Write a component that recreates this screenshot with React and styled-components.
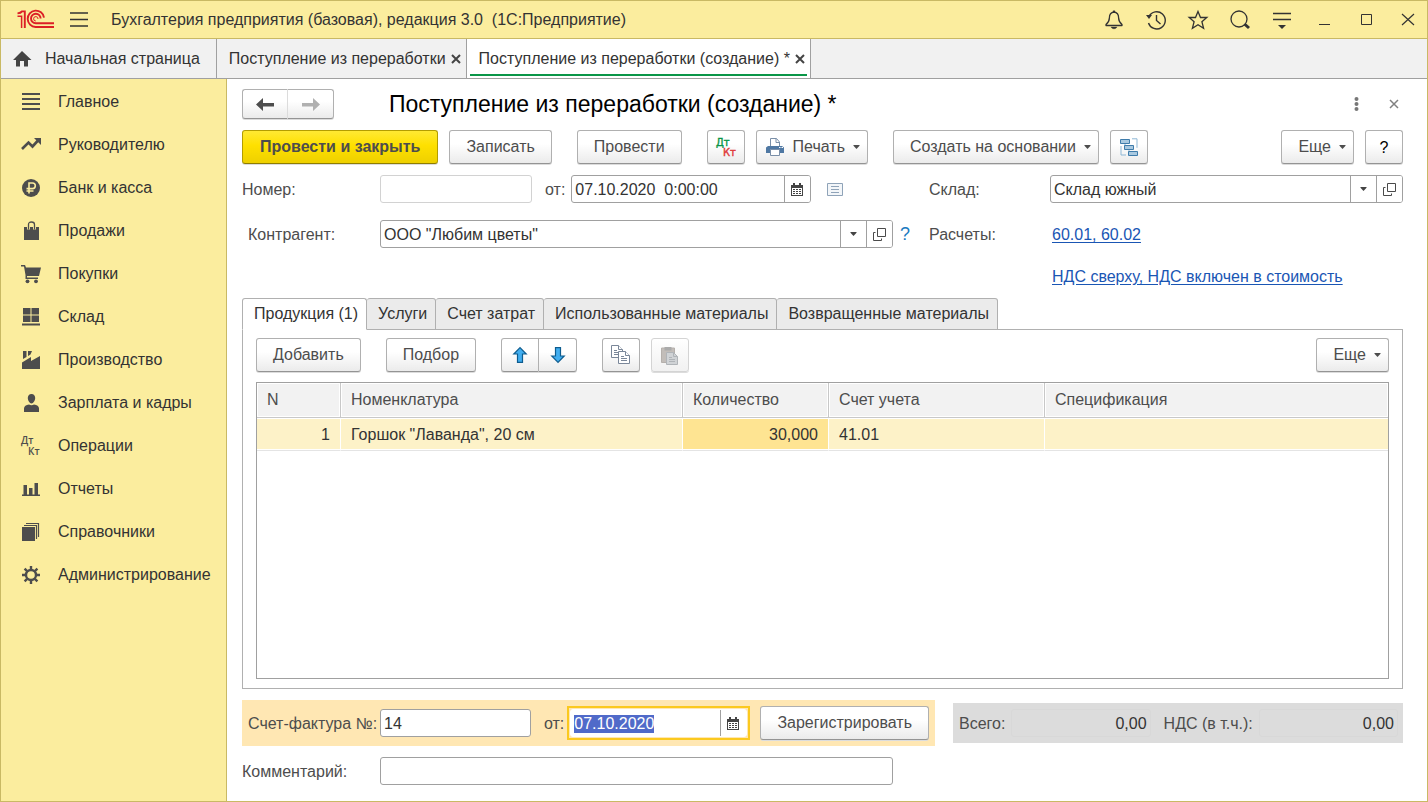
import React, { useEffect, useRef } from "react";
import styled, { createGlobalStyle, css } from "styled-components";

const color = {
  yellow: "#fbed9e",
  frame: "#c9b964",
  text: "#333333",
  label: "#4d4d4d",
  icon: "#4d4d4d",
  line: "#a0a0a0",
  tabLine: "#b0b0b0",
  link: "#1a56b4",
};

const GlobalStyle = createGlobalStyle`
  *, *::before, *::after { box-sizing: border-box; }
  body { margin: 0; background: #fff; }
  body, button, input { font-family: "Liberation Sans", Arial, sans-serif; font-size: 16px; }
  svg { display: block; flex: none; overflow: visible; }
  ::selection { background: rgba(78, 104, 200, 0.99); color: #fff; }
`;

/* ---------- window frame ---------- */

const Window = styled.div`
  min-height: 100vh;
  display: flex;
  flex-direction: column;
  border: 1px solid ${color.frame};
  color: ${color.text};
  line-height: 20px;
`;

const TitleBar = styled.header`
  height: 38px;
  display: flex;
  align-items: center;
  padding: 0 9px 0 16px;
  background: ${color.yellow};
  border-bottom: 1px solid ${color.frame};
`;

const BarButton = styled.button`
  width: 20px;
  height: 20px;
  padding: 0;
  border: 0;
  background: none;
  color: ${color.text};
  display: flex;
  align-items: center;
  justify-content: center;
`;

const MenuButton = styled(BarButton)`
  margin: 0 22px 0 15px;
`;

const AppTitle = styled.span`
  flex: 1;
  white-space: pre;
`;

const BarActions = styled.div`
  display: flex;
  gap: 22px;
`;

const WindowTabs = styled.nav`
  height: 40px;
  display: flex;
  background: #f1f1f1;
  border-bottom: 1px solid ${color.line};
`;

const WindowTab = styled.div`
  position: relative;
  display: flex;
  align-items: center;
  gap: 5px;
  padding: 0 5px 0 12px;
  border-right: 1px solid ${color.line};
  white-space: nowrap;
  background: ${(p) => (p.$active ? "#fff" : "transparent")};
  ${(p) =>
    p.$active &&
    css`
      &::after {
        content: "";
        position: absolute;
        left: 3px;
        right: 3px;
        bottom: 2px;
        height: 2px;
        background: #0a9648;
      }
    `}
`;

const TabLink = styled.a`
  display: flex;
  align-items: center;
  gap: 12px;
  color: ${color.text};
  text-decoration: none;
  padding-right: ${(p) => (p.$home ? "11px" : "0")};
`;

const CloseButton = styled.button`
  width: ${(p) => (p.$muted ? "12px" : "10px")};
  height: 12px;
  padding: 0;
  border: 0;
  background: none;
  color: ${(p) => (p.$muted ? "#808080" : "#444")};
  display: flex;
  align-items: center;
  justify-content: center;
`;

const Body = styled.div`
  flex: 1;
  display: flex;
`;

const Sidebar = styled.nav`
  flex: none;
  width: 226px;
  background: ${color.yellow};
  border-right: 1px solid ${color.frame};
`;

const SidebarLink = styled.a`
  height: 43px;
  display: flex;
  align-items: center;
  gap: 17px;
  padding: 2px 0 0 20px;
  color: ${color.text};
  text-decoration: none;
  svg { color: ${color.icon}; }
`;

/* ---------- document form ---------- */

const Form = styled.main`
  flex: 1;
  min-width: 0;
  display: flex;
  flex-direction: column;
  padding: 10px 24px 16px 15px;
`;

const FormHeader = styled.div`
  display: flex;
  align-items: center;
  margin-bottom: 11px;
`;

const Heading = styled.h1`
  flex: 1;
  margin: 0 0 0 55px;
  font-size: 23px;
  line-height: 30px;
  font-weight: 400;
  color: #000;
`;

const HeaderActions = styled.div`
  display: flex;
  align-items: center;
  gap: 26px;
  padding-right: 3px;
`;

const Button = styled.button`
  flex: none;
  height: 34px;
  min-width: ${(p) => (p.$square ? "38px" : "0")};
  padding: ${(p) => (p.$square ? "0" : p.$menu ? "0 7px 0 16px" : "0 16px")};
  display: flex;
  align-items: center;
  justify-content: center;
  gap: 8px;
  border: 1px solid #b0b0b0;
  border-bottom-color: #949494;
  border-radius: 3px;
  background: linear-gradient(#fff 0%, #fff 40%, #ebebeb 100%);
  box-shadow: 0 1px 0 #dcdcdc;
  color: ${color.label};
  white-space: nowrap;
  ${(p) =>
    p.$primary &&
    css`
      padding: 0 17px;
      border-color: #b39d00;
      border-bottom-color: #8f7d00;
      background: linear-gradient(#ffe933 0%, #fee000 45%, #eed000 100%);
      font-weight: 700;
    `}
  ${(p) =>
    p.$print &&
    css`
      padding-left: 9px;
    `}
  ${(p) =>
    p.$help &&
    css`
      padding-top: 2px;
      color: #000;
    `}
  &:disabled {
    border-color: #d4d4d4;
    background: linear-gradient(#fff, #f1f1f1);
  }
`;

const ButtonPair = styled.div`
  display: flex;
  ${Button} {
    min-width: ${(p) => (p.$nav ? "46px" : "38px")};
    height: ${(p) => (p.$nav ? "30px" : "34px")};
  }
  ${Button}:first-child { border-radius: 3px 0 0 3px; }
  ${Button}:last-child { border-radius: 0 3px 3px 0; border-left: 0; }
  ${Button}:first-child { border-right-color: ${(p) => (p.$nav ? "#dcdcdc" : "#b0b0b0")}; }
`;

const Toolbar = styled.div`
  display: flex;
  gap: 25px;
`;

const ToolGroup = styled.div`
  display: flex;
  gap: 11px;
  ${(p) =>
    p.$end &&
    css`
      margin-left: auto;
    `}
`;

const Fields = styled.div`
  display: grid;
  grid-template-columns: 138px minmax(0, 549fr) 121px minmax(0, 353fr);
  align-items: center;
  row-gap: 17px;
  margin: 11px 0 7px;
`;

const Label = styled.label`
  color: ${color.label};
  white-space: nowrap;
  padding-top: 2px;
  padding-left: ${(p) => (p.$indent ? "6px" : "0")};
`;

const FieldLine = styled.div`
  display: flex;
  align-items: center;
  min-width: 0;
`;

const FieldBox = styled.div`
  display: flex;
  flex: 1;
  min-width: 0;
  height: 28px;
  overflow: hidden;
  border: 1px solid ${(p) => (p.$pale ? "#d2d2d2" : color.line)};
  border-radius: 3px;
  background: #fff;
`;

const TextInput = styled.input`
  flex: 1;
  width: 0;
  min-width: 0;
  padding: 2px 3px 0;
  border: 0;
  outline: 0;
  background: transparent;
  color: ${color.text};
  text-align: ${(p) => (p.$right ? "right" : "left")};
`;

const FieldButton = styled.button`
  flex: none;
  width: 26px;
  padding: 0;
  border: 0;
  border-left: 1px solid ${color.line};
  background: #fff;
  color: #444;
  display: flex;
  align-items: center;
  justify-content: center;
`;

const FixedField = styled.div`
  flex: none;
  display: flex;
  width: ${(p) => p.$width}px;
`;

const Between = styled(Label)`
  padding-left: 13px;
  padding-right: 6px;
`;

const IconButton = styled.button`
  padding: 0;
  border: 0;
  background: none;
  margin-left: 16px;
`;

const Hint = styled.button`
  width: 36px;
  padding: 0 0 0 7px;
  border: 0;
  background: none;
  color: #1a7abf;
  font-size: 18px;
  text-align: left;
`;

const Link = styled.a`
  color: ${color.link};
  padding-top: 2px;
  padding-left: 2px;
  white-space: nowrap;
  text-underline-offset: 2px;
`;

const VatLine = styled.div`
  grid-column: 4;
  line-height: 28px;
  margin-top: -2px;
`;

/* ---------- tabbed table ---------- */

const TabStrip = styled.div`
  display: flex;
  margin-bottom: -1px;
`;

const Tab = styled.button`
  height: 32px;
  padding: 0 8px 0 11px;
  border: 1px solid ${color.tabLine};
  border-left-width: ${(p) => (p.$active ? "1px" : "0")};
  border-radius: 3px 3px 0 0;
  border-bottom-color: ${(p) => (p.$active ? "#fff" : color.tabLine)};
  background: ${(p) => (p.$active ? "#fff" : "#ebebeb")};
  color: ${color.text};
  white-space: nowrap;
  position: relative;
`;

const Panel = styled.section`
  flex: 1;
  display: flex;
  flex-direction: column;
  gap: 10px;
  padding: 8px 13px 9px;
  border: 1px solid ${color.tabLine};
`;

const TableFrame = styled.div`
  flex: 1;
  border: 1px solid ${color.line};
`;

const Table = styled.table`
  width: 100%;
  table-layout: fixed;
  border-spacing: 0;
`;

const Col = styled.col`
  width: ${(p) => (p.$width ? `${p.$width}px` : "auto")};
`;

const HeadCell = styled.th`
  height: 35px;
  padding: 0 10px;
  text-align: left;
  font-weight: 400;
  color: ${color.label};
  background: #f2f2f2;
  border-bottom: 1px solid #c8c8c8;
  border-right: 1px solid #c8c8c8;
  box-shadow: inset 0 0 0 1px #fff;
  &:last-child { border-right: 0; }
`;

const Cell = styled.td`
  height: 33px;
  padding: 2px 10px 0;
  text-align: ${(p) => (p.$right ? "right" : "left")};
  background: ${(p) => (p.$current ? "#fee492" : "#fdf2c8")};
  border-bottom: 1px solid #e4e4e4;
  border-right: 1px solid #fff;
  box-shadow: inset 0 1px 0 #fff, inset 0 -1px 0 #fff;
  &:last-child { border-right: 0; }
`;

/* ---------- footer ---------- */

const Footer = styled.div`
  display: grid;
  grid-template-columns: minmax(0, 693fr) minmax(0, 450fr);
  align-items: center;
  gap: 18px;
  margin: 11px 0;
`;

const InvoiceBox = styled.div`
  height: 46px;
  display: flex;
  align-items: center;
  padding: 0 6px;
  background: #ffe7b3;
`;

const InvoiceLabel = styled(Label)`
  flex: none;
  width: 132px;
`;

const FocusRing = styled.div`
  flex: 183 1 0;
  display: flex;
  margin-right: 10px;
  margin-left: -3px;
  border: 2px solid #fbc91f;
  padding: 1px;
  ${FieldBox} { border-color: #fff; }
`;

const InvoiceNumber = styled.div`
  flex: 156 1 0;
  display: flex;
`;

const TotalsBox = styled.div`
  height: 40px;
  display: flex;
  align-items: center;
  padding: 0 5px 0 6px;
  background: #dcdcdc;
  ${FieldBox} { background: transparent; border-color: #d8d8d8; margin-left: 6px; }
  ${Label} + ${FieldBox} + ${Label} { padding-left: 13px; }
`;

const CommentLine = styled.div`
  display: grid;
  grid-template-columns: 138px minmax(0, 513fr) minmax(0, 510fr);
  align-items: center;
`;

/* ---------- icons ---------- */

const Svg = ({ w = 20, h = w, children, ...rest }) => (
  <svg width={w} height={h} viewBox={`0 0 ${w} ${h}`} fill="none" aria-hidden="true" {...rest}>
    {children}
  </svg>
);

const Logo = () => (
  <Svg w={37} h={19} stroke="#dc1f26" strokeWidth="1.9">
    <path d="M7.800 18V1.400H5C4.200 2.600 2.600 3.200.500 3.400" />
    <path d="M4.600 18V6.200H.500" strokeWidth="1.5" />
    <path d="M27 7.600A8.200 8.200 0 1 0 18.600 17H37" />
    <path d="M23.600 8.600A4.800 4.800 0 1 0 18.800 13.300H37" />
    <path d="M21 9a2.200 2.200 0 1 0-2.200 2" strokeWidth="1" />
  </Svg>
);

const Burger = () => (
  <Svg w={18} h={15} stroke="currentColor" strokeWidth="1.4">
    <path d="M0 1h18M0 7.5h18M0 14h18" />
  </Svg>
);

const Bell = () => (
  <Svg stroke="currentColor" strokeWidth="1.3" strokeLinejoin="round">
    <path d="M10 2C6.600 2.500 5.400 5 5.400 7.800c0 3.200-1 4.800-3.400 6.800v.9h16v-.9c-2.400-2-3.400-3.600-3.400-6.800C14.600 5 13.400 2.500 10 2z" />
    <path d="M9 .8h2v1.500H9zM7 17h6c-.6 1.200-1.500 1.800-3 1.800S7.600 18.200 7 17z" fill="currentColor" strokeWidth=".3" />
  </Svg>
);

const History = () => (
  <Svg stroke="currentColor" strokeWidth="1.4">
    <path d="M3 6.500A8.600 8.600 0 1 1 2.500 13" />
    <path d="M10.500 5v5.500l4 3.500" />
    <path d="M0 5h6L3 9z" fill="currentColor" stroke="none" />
  </Svg>
);

const Star = () => (
  <Svg stroke="currentColor" strokeWidth="1.3">
    <path d="m10 1.500 2.500 6h6.300l-4.900 4.200 1.700 6.600-5.600-3.600-5.600 3.600 1.700-6.600L1.200 7.500h6.300z" />
  </Svg>
);

const Search = () => (
  <Svg stroke="currentColor" strokeWidth="1.3">
    <circle cx="9" cy="9" r="8" />
    <path d="m14.500 14 4.500 4" strokeWidth="3" />
  </Svg>
);

const Settings = () => (
  <Svg stroke="currentColor" strokeWidth="1.5">
    <path d="M1 3.500h18M1 9.500h18" />
    <path d="M6 15h8l-4 4z" fill="currentColor" stroke="none" />
  </Svg>
);

const Minimize = () => (
  <Svg stroke="currentColor"><path d="M5 14.500h11" /></Svg>
);

const Maximize = () => (
  <Svg stroke="currentColor"><path d="M5.500 4.500h10v10h-10z" /></Svg>
);

const CloseWindow = () => (
  <Svg stroke="currentColor" strokeWidth="1.2"><path d="m4 4 12 11M16 4 4 15" /></Svg>
);

const Cross = ({ thin }) => (
  <Svg w={10} stroke="currentColor" strokeWidth={thin ? 1.5 : 2}>
    <path d="m1 1 8 8M9 1 1 9" />
  </Svg>
);

const Home = () => (
  <Svg w={20} h={16} fill="#444">
    <path d="M9 0l9.500 9H15v6.500h-4V10H7v5.500H3V9H0z" />
  </Svg>
);

const Caret = () => (
  <Svg w={7} h={4} fill="currentColor"><path d="M.5 0h6v.8L3.500 4 .5.800z" /></Svg>
);

const MainIcon = () => (
  <Svg stroke="currentColor" strokeWidth="1.8"><path d="M1 2h18M1 7h18M1 12h18M1 17h18" /></Svg>
);

const ChiefIcon = () => (
  <Svg stroke="currentColor" strokeWidth="2.6">
    <path d="m1 14 6.500-6.500 4 4L17 5.500" />
    <path d="M13 3h7v7z" fill="currentColor" stroke="none" />
  </Svg>
);

const BankIcon = () => (
  <Svg>
    <circle cx="10" cy="10" r="9" fill="currentColor" />
    <path d="M8 15.500V5h3.500a2.800 2.800 0 0 1 0 5.600H5.500M5.500 13h7" stroke={color.yellow} strokeWidth="1.6" />
  </Svg>
);

const SalesIcon = () => (
  <Svg>
    <path d="M3 6h15v13H3z" fill="currentColor" />
    <path d="M7.500 8.500V3.500Q7.500 1 10.500 1t3 2.500v5" stroke={color.yellow} strokeWidth="3" />
    <path d="M7.500 8.500V3.500Q7.500 1 10.500 1t3 2.500v5" stroke="currentColor" strokeWidth="1.3" />
  </Svg>
);

const PurchaseIcon = () => (
  <Svg fill="currentColor">
    <path d="M0 1h4l1 2.500h15L18 12H6v1.500h11V15H4.500v-4L3 2.500H0z" />
    <circle cx="6.500" cy="17.300" r="1.900" />
    <circle cx="15" cy="17.300" r="1.900" />
  </Svg>
);

const StockIcon = () => (
  <Svg fill="currentColor">
    <path d="M2 1h7.500v6.500H2zM10.500 1H18v6.500h-7.500zM2 8.500h7.500V15H2zM10.500 8.500H18V15h-7.500zM1 16.500h18v2H1z" />
  </Svg>
);

const FactoryIcon = () => (
  <Svg fill="currentColor">
    <path d="M1 19v-6.500L10 7v4l9-5v13zM2 1h3.500v6L2 9zM7 1h4L9.500 4.500 7 6z" />
  </Svg>
);

const StaffIcon = () => (
  <Svg fill="currentColor">
    <path d="M10.500 1C13 1 14.200 2.800 14.200 5s-1.700 5.500-3.700 5.500S6.800 7.200 6.800 5 8 1 10.500 1zM3 19v-3.500c0-2.500 2-3.500 5-4 1.500 1 3.500 1 5 0 3 .5 5 1.500 5 4V19z" />
  </Svg>
);

const OperationsIcon = () => (
  <Svg fontFamily="Open Sans, sans-serif" fontSize="10" fontWeight="600" fill="currentColor">
    <text x="0" y="8">Дт</text>
    <text x="7" y="19">Кт</text>
  </Svg>
);

const PostingsIcon = () => (
  <Svg fontFamily="DejaVu Sans, sans-serif" fontSize="10" strokeWidth=".4">
    <text x="0" y="9" fill="#0a9648" stroke="#0a9648">Дт</text>
    <text x="7" y="19" fill="#e03a3a" stroke="#e03a3a">Кт</text>
  </Svg>
);

const ReportsIcon = () => (
  <Svg fill="currentColor">
    <path d="M1 15.500h18V17H1zM2.500 6H6v10H2.500zM8 9h3.500v7H8zM13.500 4H17v12h-3.500z" />
  </Svg>
);

const CatalogIcon = () => (
  <Svg>
    <path d="M1 5h13v14H1z" fill="currentColor" />
    <path d="M3 3.500h12.500V17M5 1.500h12.500V15" stroke="currentColor" strokeWidth="1.2" />
  </Svg>
);

const AdminIcon = () => (
  <Svg stroke="currentColor">
    <circle cx="10" cy="10" r="5" strokeWidth="2.4" />
    <path d="M10 1v3.500M10 15.500V19M1 10h3.500M15.500 10H19M3.600 3.600l2.500 2.500M13.900 13.900l2.500 2.500M16.400 3.600l-2.500 2.500M6.100 13.900l-2.500 2.500" strokeWidth="2.4" />
  </Svg>
);

const BackIcon = ({ muted }) => (
  <Svg w={18} h={13} fill={muted ? "#b0b0b0" : "#4d4d4d"}>
    <path d={muted ? "M18 6.500 11 0v5H0v3.500h11V13z" : "M0 6.500 7 0v5h11v3.500H7V13z"} />
  </Svg>
);

const PrintIcon = () => (
  <Svg w={19} h={18}>
    <path d="M4.500 9V.500h6L13.500 4v5" fill="#fff" stroke="#7a8fa8" />
    <path d="M10 .500V4.500h3.500" stroke="#7a8fa8" />
    <path d="M0 9.500 2 8h14l2 1.500V15H0z" fill="#4f78a3" />
    <path d="M4.500 11.500h9v6h-9z" fill="#fff" stroke="#7a8fa8" />
    <path d="M13 9h1.500v1H13zM15.500 9H17v1h-1.500z" fill="#fff" />
  </Svg>
);

const StructureIcon = () => (
  <Svg w={18} stroke="#3f7cab">
    <path d="M12 .8h5v9M1 8v9h5M5 5v4M9 11v4" stroke="#8fb8d6" />
    <path d="M.5 1.500h9v4h-9zM4.500 7.500h9v4h-9zM8.500 13.500h9v4h-9z" fill="#a9c9e0" />
  </Svg>
);

const CalendarIcon = () => (
  <Svg w={13} h={13}>
    <path d="M0 2h12v11H0z" fill="#444" />
    <path d="M2 0h2v3H2zM8 0h2v3H8z" fill="#444" />
    <path d="M1 5h10v7H1z" fill="#fff" />
    <path d="M2 6h2v1H2zM5 6h2v1H5zM8 6h2v1H8zM2 8h2v1H2zM5 8h2v1H5zM8 8h2v1H8zM2 10h2v1H2zM5 10h2v1H5zM8 10h2v1H8z" fill="#444" />
  </Svg>
);

const OpenIcon = () => (
  <Svg w={13} stroke="#4a4a4a">
    <path d="M4.500.500h8v8h-8zM2.500 4.500h-2v8h8v-2" />
  </Svg>
);

const ListIcon = () => (
  <Svg w={16} h={13}>
    <path d="M.5.500h15v12H.5z" fill="#f3f6f9" stroke="#8fa3b8" />
    <path d="M4 3.500h8M4 6.500h8M4 9.500h8" stroke="#8fa3b8" />
  </Svg>
);

const DotsIcon = () => (
  <Svg w={5} h={14} fill="#777">
    <circle cx="2.5" cy="2" r="2" /><circle cx="2.5" cy="7" r="2" /><circle cx="2.5" cy="12" r="2" />
  </Svg>
);

const MoveIcon = ({ down }) => (
  <Svg w={14} h={16}>
    <path
      d={down ? "M7 15.300.8 9h3.700V.7h5V9h3.700z" : "M7 .7.8 7h3.700v8.300h5V7h3.700z"}
      fill="#41aef0"
      stroke="#0d5c8f"
      strokeWidth="1.2"
    />
  </Svg>
);

const CopyIcon = () => (
  <Svg w={20} stroke="#7a8799" fill="#fff">
    <path d="M.5.500h7l4 4v8H.5z" />
    <path d="M7.500.500v4h4M3 5.500h3M3 7.500h4M3 9.500h4" />
    <path d="M7.500 6.500h7l4 4v8h-11z" />
    <path d="M14.500 6.500v4h4M10 11.500h3M10 13.500h6M10 15.500h6" />
  </Svg>
);

const PasteIcon = () => (
  <Svg w={18} h={19}>
    <path d="M.5 2h13v14.500H.5z" fill="#c2bdb9" stroke="#b5b0ac" />
    <path d="M3.500 1h7v3.500h-7z" fill="#aaa" />
    <path d="M5.500 6.500h7l4 4v8h-11z" fill="#d0d3d6" stroke="#b0b4b8" />
    <path d="M12.500 6.500v4h4M8 11.500h3M8 13.500h6M8 15.500h6" stroke="#b0b4b8" />
  </Svg>
);

/* ---------- data ---------- */

const sections = [
  ["Главное", MainIcon],
  ["Руководителю", ChiefIcon],
  ["Банк и касса", BankIcon],
  ["Продажи", SalesIcon],
  ["Покупки", PurchaseIcon],
  ["Склад", StockIcon],
  ["Производство", FactoryIcon],
  ["Зарплата и кадры", StaffIcon],
  ["Операции", OperationsIcon],
  ["Отчеты", ReportsIcon],
  ["Справочники", CatalogIcon],
  ["Администрирование", AdminIcon],
];

const windowActions = [
  ["Уведомления", Bell],
  ["История", History],
  ["Избранное", Star],
  ["Поиск", Search],
  ["Настройки", Settings],
  ["Свернуть", Minimize],
  ["Развернуть", Maximize],
  ["Закрыть окно", CloseWindow],
];

const formTabs = ["Продукция (1)", "Услуги", "Счет затрат", "Использованные материалы", "Возвращенные материалы"];

const columns = [
  ["N", 84],
  ["Номенклатура", 342],
  ["Количество", 146],
  ["Счет учета", 216],
  ["Спецификация", 0],
];

/* ---------- composite parts ---------- */

const ReferenceField = ({ id, value }) => (
  <FieldBox>
    <TextInput id={id} defaultValue={value} />
    <FieldButton type="button" aria-label="Выбрать"><Caret /></FieldButton>
    <FieldButton type="button" aria-label="Открыть"><OpenIcon /></FieldButton>
  </FieldBox>
);

const DateField = ({ id, value, inputRef }) => (
  <FieldBox>
    <TextInput id={id} ref={inputRef} defaultValue={value} />
    <FieldButton type="button" aria-label="Календарь"><CalendarIcon /></FieldButton>
  </FieldBox>
);

export default function App() {
  const invoiceDate = useRef(null);

  useEffect(() => {
    invoiceDate.current.focus();
    invoiceDate.current.select();
  }, []);

  return (
    <>
      <GlobalStyle />
      <Window>
        <TitleBar>
          <Logo />
          <MenuButton type="button" aria-label="Меню"><Burger /></MenuButton>
          <AppTitle>{"Бухгалтерия предприятия (базовая), редакция 3.0  (1С:Предприятие)"}</AppTitle>
          <BarActions>
            {windowActions.map(([name, Icon]) => (
              <BarButton key={name} type="button" aria-label={name}><Icon /></BarButton>
            ))}
          </BarActions>
        </TitleBar>

        <WindowTabs>
          <WindowTab>
            <TabLink href="#home" $home><Home />Начальная страница</TabLink>
          </WindowTab>
          <WindowTab>
            <TabLink href="#list">Поступление из переработки</TabLink>
            <CloseButton type="button" aria-label="Закрыть"><Cross /></CloseButton>
          </WindowTab>
          <WindowTab $active>
            <TabLink href="#new">Поступление из переработки (создание) *</TabLink>
            <CloseButton type="button" aria-label="Закрыть"><Cross /></CloseButton>
          </WindowTab>
        </WindowTabs>

        <Body>
          <Sidebar>
            {sections.map(([name, Icon]) => (
              <SidebarLink key={name} href="#section"><Icon />{name}</SidebarLink>
            ))}
          </Sidebar>

          <Form>
            <FormHeader>
              <ButtonPair $nav>
                <Button type="button" $square aria-label="Назад"><BackIcon /></Button>
                <Button type="button" $square aria-label="Вперед"><BackIcon muted /></Button>
              </ButtonPair>
              <Heading>Поступление из переработки (создание) *</Heading>
              <HeaderActions>
                <CloseButton type="button" $muted aria-label="Действия"><DotsIcon /></CloseButton>
                <CloseButton type="button" $muted aria-label="Закрыть форму"><Cross thin /></CloseButton>
              </HeaderActions>
            </FormHeader>

            <Toolbar>
              <ToolGroup>
                <Button type="button" $primary>Провести и закрыть</Button>
                <Button type="button">Записать</Button>
              </ToolGroup>
              <Button type="button">Провести</Button>
              <ToolGroup>
                <Button type="button" $square aria-label="Проводки"><PostingsIcon /></Button>
                <Button type="button" $menu $print><PrintIcon />Печать<Caret /></Button>
              </ToolGroup>
              <ToolGroup>
                <Button type="button" $menu>Создать на основании<Caret /></Button>
                <Button type="button" $square aria-label="Структура подчиненности"><StructureIcon /></Button>
              </ToolGroup>
              <ToolGroup $end>
                <Button type="button" $menu>Еще<Caret /></Button>
                <Button type="button" $square $help>?</Button>
              </ToolGroup>
            </Toolbar>

            <Fields>
              <Label htmlFor="number">Номер:</Label>
              <FieldLine>
                <FixedField $width={152}>
                  <FieldBox $pale><TextInput id="number" /></FieldBox>
                </FixedField>
                <Between htmlFor="date">от:</Between>
                <FixedField $width={240}>
                  <DateField id="date" value="07.10.2020  0:00:00" />
                </FixedField>
                <IconButton type="button" aria-label="Реквизиты"><ListIcon /></IconButton>
              </FieldLine>
              <Label htmlFor="stock">Склад:</Label>
              <ReferenceField id="stock" value="Склад южный" />

              <Label htmlFor="partner" $indent>Контрагент:</Label>
              <FieldLine>
                <ReferenceField id="partner" value={'ООО "Любим цветы"'} />
                <Hint type="button">?</Hint>
              </FieldLine>
              <Label as="span">Расчеты:</Label>
              <Link href="#accounts">60.01, 60.02</Link>

              <VatLine><Link href="#vat">НДС сверху, НДС включен в стоимость</Link></VatLine>
            </Fields>

            <TabStrip role="tablist">
              {formTabs.map((name, i) => (
                <Tab key={name} type="button" role="tab" aria-selected={i === 0} $active={i === 0}>{name}</Tab>
              ))}
            </TabStrip>
            <Panel>
              <Toolbar>
                <Button type="button">Добавить</Button>
                <Button type="button">Подбор</Button>
                <ButtonPair>
                  <Button type="button" $square aria-label="Вверх"><MoveIcon /></Button>
                  <Button type="button" $square aria-label="Вниз"><MoveIcon down /></Button>
                </ButtonPair>
                <ToolGroup>
                  <Button type="button" $square aria-label="Копировать"><CopyIcon /></Button>
                  <Button type="button" $square disabled aria-label="Вставить"><PasteIcon /></Button>
                </ToolGroup>
                <ToolGroup $end>
                  <Button type="button" $menu>Еще<Caret /></Button>
                </ToolGroup>
              </Toolbar>
              <TableFrame>
                <Table>
                  <colgroup>
                    {columns.map(([name, width]) => <Col key={name} $width={width} />)}
                  </colgroup>
                  <thead>
                    <tr>{columns.map(([name]) => <HeadCell key={name}>{name}</HeadCell>)}</tr>
                  </thead>
                  <tbody>
                    <tr>
                      <Cell $right>1</Cell>
                      <Cell>Горшок "Лаванда", 20 см</Cell>
                      <Cell $right $current>30,000</Cell>
                      <Cell>41.01</Cell>
                      <Cell />
                    </tr>
                  </tbody>
                </Table>
              </TableFrame>
            </Panel>

            <Footer>
              <InvoiceBox>
                <InvoiceLabel htmlFor="invoice">Счет-фактура №:</InvoiceLabel>
                <InvoiceNumber>
                  <FieldBox><TextInput id="invoice" defaultValue="14" /></FieldBox>
                </InvoiceNumber>
                <Between htmlFor="invoice-date">от:</Between>
                <FocusRing>
                  <DateField id="invoice-date" value="07.10.2020" inputRef={invoiceDate} />
                </FocusRing>
                <Button type="button">Зарегистрировать</Button>
              </InvoiceBox>
              <TotalsBox>
                <Label htmlFor="total">Всего:</Label>
                <FieldBox><TextInput id="total" defaultValue="0,00" $right readOnly /></FieldBox>
                <Label htmlFor="vat">НДС (в т.ч.):</Label>
                <FieldBox><TextInput id="vat" defaultValue="0,00" $right readOnly /></FieldBox>
              </TotalsBox>
            </Footer>

            <CommentLine>
              <Label htmlFor="comment">Комментарий:</Label>
              <FieldBox><TextInput id="comment" /></FieldBox>
            </CommentLine>
          </Form>
        </Body>
      </Window>
    </>
  );
}
